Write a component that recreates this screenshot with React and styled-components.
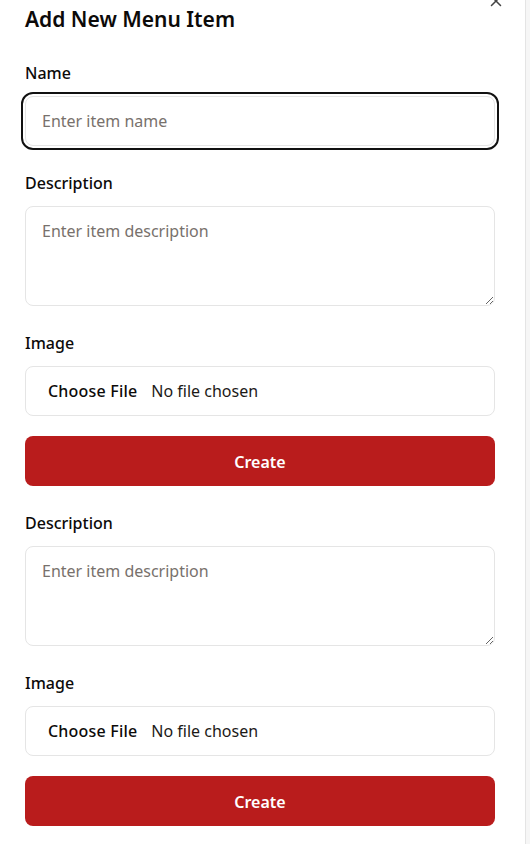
import styled, { createGlobalStyle } from 'styled-components';
import { X } from 'lucide-react';

const GlobalStyle = createGlobalStyle`
  html, body {
    margin: 0;
    padding: 0;
    background: #f6f6f6;
  }
  body {
    font-family: "Noto Sans", "Open Sans", sans-serif;
    color: #0c0a09;
  }
  * {
    box-sizing: border-box;
  }
`;

const Panel = styled.div`
  position: relative;
  width: 526px;
  min-height: 844px;
  background: #fff;
  border-right: 1px solid #e4e4e4;
  padding: 5px 30px 0 25px;
  overflow: hidden;
`;

const Close = styled.button`
  position: absolute;
  top: -8px;
  right: 20px;
  width: 18px;
  height: 18px;
  padding: 0;
  border: none;
  background: none;
  color: #444;
  display: flex;
  align-items: center;
  justify-content: center;
`;

const Title = styled.h2`
  margin: 0 0 28px;
  font-size: 21px;
  line-height: 28px;
  font-weight: 600;
`;

const Form = styled.form`
  display: flex;
  flex-direction: column;
`;

const Field = styled.div`
  display: flex;
  flex-direction: column;
  gap: 11px;
  margin-bottom: ${p => p.$gap ?? 25}px;
`;

const Label = styled.label`
  font-size: 16px;
  line-height: 24px;
  font-weight: 500;
`;

const Input = styled.input`
  height: 50px;
  width: 100%;
  padding: 0 16px;
  border: 1px solid #e5e5e5;
  border-radius: 8px;
  font: inherit;
  font-size: 16px;
  color: #0c0a09;
  outline: ${p => (p.$focused ? '2px solid #111' : 'none')};
  outline-offset: 2px;

  &::placeholder {
    color: #78716c;
  }
`;

const TextArea = styled.textarea`
  height: 100px;
  width: 100%;
  padding: 12px 16px;
  border: 1px solid #e5e5e5;
  border-radius: 8px;
  font: inherit;
  font-size: 16px;
  line-height: 24px;
  resize: vertical;
  outline: none;

  &::placeholder {
    color: #78716c;
  }
`;

const FileInput = styled.input`
  height: 50px;
  width: 100%;
  padding: 0 16px;
  border: 1px solid #e5e5e5;
  border-radius: 8px;
  font: inherit;
  font-size: 16px;
  line-height: 48px;
  color: #1c1917;

  &::file-selector-button {
    height: 48px;
    padding: 0 8px 0 6px;
    margin-right: 6px;
    border: none;
    background: none;
    font: inherit;
    font-weight: 500;
    letter-spacing: 0.2px;
    color: #0c0a09;
  }
`;

const Submit = styled.button`
  height: 50px;
  width: 100%;
  margin-bottom: 25px;
  border: none;
  border-radius: 8px;
  background: #b91c1c;
  color: #fff;
  font: inherit;
  font-size: 16px;
  font-weight: 600;
  line-height: 50px;
`;

const DetailsFields = () => (
  <>
    <Field>
      <Label>Description</Label>
      <TextArea placeholder="Enter item description" />
    </Field>
    <Field $gap={20}>
      <Label>Image</Label>
      <FileInput type="file" />
    </Field>
    <Submit type="button">Create</Submit>
  </>
);

export default function App() {
  return (
    <>
      <GlobalStyle />
      <Panel>
        <Close aria-label="Close">
          <X size={18} strokeWidth={2} />
        </Close>
        <Title>Add New Menu Item</Title>
        <Form>
          <Field>
            <Label>Name</Label>
            <Input $focused placeholder="Enter item name" />
          </Field>
          <DetailsFields />
          <DetailsFields />
        </Form>
      </Panel>
    </>
  );
}
